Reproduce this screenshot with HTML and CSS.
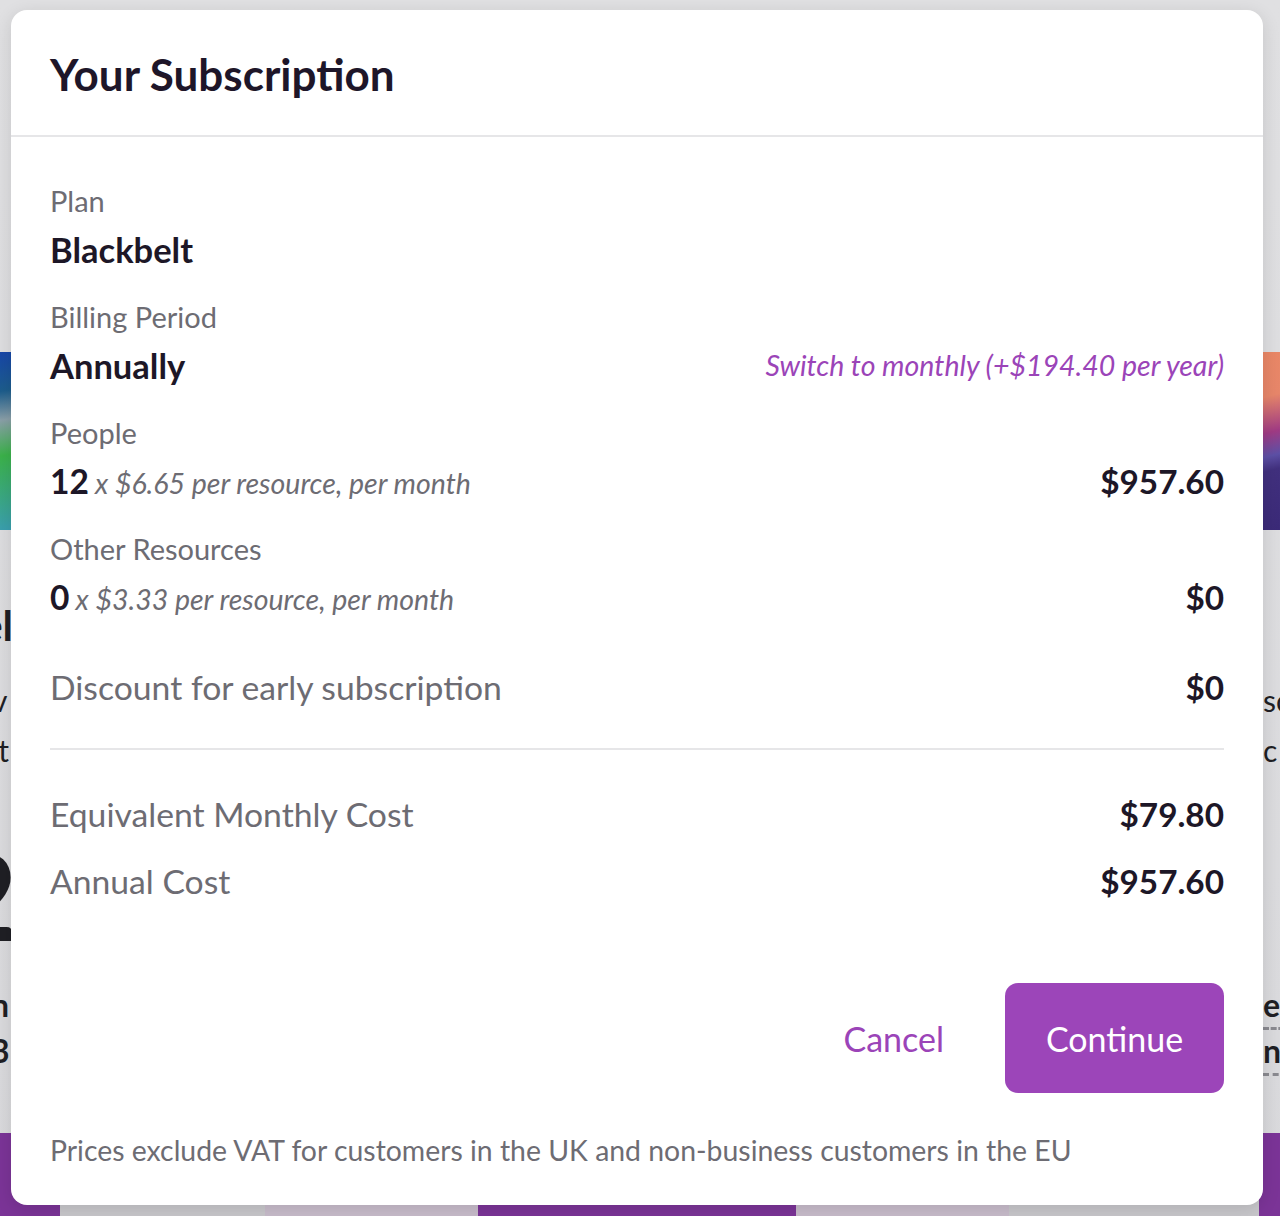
FILE: index.html
```html
<!DOCTYPE html>
<html lang="en">
<head>
<meta charset="utf-8">
<title>Your Subscription</title>
<link rel="stylesheet" href="styles.css">
</head>
<body>
<div class="backdrop">
  <div class="bg-cards">
    <div class="bg-card bg-left">
      <div class="bg-inner">
        <div class="bg-img img-a"></div>
        <div class="bg-title">Tel</div>
        <div class="bg-line first">v</div>
        <div class="bg-line">ct</div>
        <div class="bg-big">2</div>
        <div class="bg-small first-small">n</div>
        <div class="bg-small">3</div>
      </div>
    </div>
    <div class="bg-card bg-mid"></div>
    <div class="bg-card bg-right">
      <div class="bg-inner">
        <div class="bg-img img-b"></div>
        <div class="bg-title">&nbsp;</div>
        <div class="bg-line first">sc</div>
        <div class="bg-line">c</div>
        <div class="bg-big">&nbsp;</div>
        <div class="bg-small first-small dashed">er</div>
        <div class="bg-small dashed">ne</div>
      </div>
    </div>
  </div>
  <div class="bg-bar">
    <span class="seg purple s1"></span>
    <span class="seg gray s2"></span>
    <span class="seg lav s3"></span>
    <span class="seg purple s4"></span>
    <span class="seg lav s5"></span>
    <span class="seg gray s6"></span>
    <span class="seg purple s7"></span>
  </div>
</div>

<div class="modal">
  <header class="modal-head">
    <h1>Your Subscription</h1>
  </header>
  <div class="modal-body">
    <div class="field">
      <div class="label">Plan</div>
      <div class="row"><span class="value">Blackbelt</span></div>
    </div>
    <div class="field">
      <div class="label">Billing Period</div>
      <div class="row"><span class="value">Annually</span><a class="switch" href="#">Switch to monthly (+$194.40 per year)</a></div>
    </div>
    <div class="field">
      <div class="label">People</div>
      <div class="row"><span><b class="qty">12</b> <i class="rate">x $6.65 per resource, per month</i></span><span class="amount">$957.60</span></div>
    </div>
    <div class="field">
      <div class="label">Other Resources</div>
      <div class="row"><span><b class="qty">0</b> <i class="rate">x $3.33 per resource, per month</i></span><span class="amount">$0</span></div>
    </div>
    <div class="line discount"><span class="line-label">Discount for early subscription</span><span class="amount">$0</span></div>
    <div class="divider"></div>
    <div class="line total-first"><span class="line-label">Equivalent Monthly Cost</span><span class="amount">$79.80</span></div>
    <div class="line total-second"><span class="line-label">Annual Cost</span><span class="amount">$957.60</span></div>
    <div class="actions">
      <button class="btn-cancel" type="button">Cancel</button>
      <button class="btn-continue" type="button">Continue</button>
    </div>
    <p class="note">Prices exclude VAT for customers in the UK and non-business customers in the EU</p>
  </div>
</div>
</body>
</html>
```
FILE: styles.css
```css
* { box-sizing: border-box; }
html, body { margin: 0; padding: 0; }
body {
  width: 1280px;
  height: 1216px;
  overflow: hidden;
  background: #dfdfe2;
  font-family: Lato, "Open Sans", "Liberation Sans", sans-serif;
  position: relative;
}

/* ---------- dimmed page behind the dialog ---------- */
.backdrop {
  position: absolute;
  inset: 0;
  display: flex;
  flex-direction: column;
  padding-top: 352px;
  background: linear-gradient(#e0e0e2, #d9d9dc);
}
.bg-cards {
  display: flex;
  justify-content: space-between;
  flex: 1;
}
.bg-card { overflow: hidden; }
.bg-left { width: 11px; }
.bg-right { width: 17px; }
.bg-inner {
  display: flex;
  flex-direction: column;
  color: #1f1f24;
  white-space: nowrap;
}
.bg-img { height: 178px; }
.img-a { background: linear-gradient(172deg, #1746a8 0%, #1d5d8c 22%, #8a9fa8 38%, #3bb24a 58%, #3a9fb0 100%); }
.img-b { background: linear-gradient(165deg, #e98766 0%, #e7866a 25%, #a03b84 45%, #5d50a6 58%, #41307e 66%, #3b2a78 100%); }
.bg-title {
  margin-top: 70px;
  font-size: 42px;
  font-weight: 700;
  line-height: 50px;
}
.bg-left .bg-title { margin-left: -40px; }
.bg-line {
  font-size: 30px;
  line-height: 50px;
}
.bg-line.first { margin-top: 25px; }
.bg-left .bg-line { margin-left: -8px; }
.bg-left .bg-line + .bg-line { margin-left: -16px; }
.bg-big {
  margin-top: 55px;
  font-size: 120px;
  line-height: 130px;
  font-weight: 700;
}
.bg-left .bg-big { margin-left: -52px; }
.bg-small {
  font-size: 32px;
  line-height: 46px;
  font-weight: 700;
}
.bg-small.first-small { margin-top: 22px; }
.bg-left .bg-small { margin-left: -9px; }
.dashed { text-decoration: underline dashed #8a8a90; text-underline-offset: 10px; }

.bg-bar {
  display: flex;
  height: 83px;
  flex: none;
}
.seg { display: block; height: 100%; }
.purple { background: #7b3497; }
.gray { background: #c8c7cb; }
.lav { background: #c8bccb; }
.s1 { width: 60px; }
.s2 { width: 205px; }
.s3 { width: 213px; }
.s4 { width: 318px; }
.s5 { width: 213px; }
.s6 { width: 250px; }
.s7 { flex: 1; }

/* ---------- dialog ---------- */
.modal {
  position: absolute;
  top: 10px;
  left: 11px;
  width: 1252px;
  height: 1195px;
  background: #fff;
  border-radius: 16px;
  box-shadow: 0 4px 18px rgba(0, 0, 0, 0.12);
  display: flex;
  flex-direction: column;
  color: #1d1727;
}
.modal-head {
  height: 127px;
  flex: none;
  display: flex;
  align-items: center;
  padding: 0 39px;
  border-bottom: 2px solid #e6e6e8;
}
.modal-head h1 {
  margin: 0;
  font-size: 44px;
  font-weight: 700;
  color: #1e1629;
  padding-top: 2px;
}
.modal-body {
  flex: 1;
  display: flex;
  flex-direction: column;
  padding: 48px 39px 39px;
}
.field { margin-bottom: 27px; }
.label {
  font-size: 29px;
  line-height: 32px;
  color: #6d6c73;
  margin-bottom: 7px;
}
.row {
  display: flex;
  justify-content: space-between;
  align-items: center;
  height: 50px;
}
.value {
  font-size: 34.5px;
  font-weight: 700;
  color: #1d1727;
}
.switch {
  font-size: 28.5px;
  font-style: italic;
  color: #9b44b8;
  text-decoration: none;
}
.qty {
  font-size: 33.5px;
  font-weight: 700;
  color: #1d1727;
  margin-right: 2px;
}
.rate {
  font-size: 28.5px;
  color: #6d6c73;
}
.amount {
  font-size: 33.3px;
  font-weight: 700;
  color: #1d1727;
}
.line {
  display: flex;
  justify-content: space-between;
  align-items: center;
  height: 50px;
}
.line-label {
  font-size: 33.7px;
  color: #6d6c73;
}
.discount { margin-top: 13px; }
.divider {
  height: 2px;
  background: #e6e6e8;
  margin: 36px 0 39px;
}
.total-second { margin-top: 17px; }
.actions {
  display: flex;
  justify-content: flex-end;
  align-items: center;
  gap: 61px;
  margin-top: 77px;
}
.btn-cancel {
  background: none;
  border: 0;
  padding: 0;
  font-family: inherit;
  font-size: 34px;
  color: #9b44b8;
}
.btn-continue {
  width: 219px;
  height: 110px;
  border: 0;
  border-radius: 13px;
  background: #9c45b9;
  color: #fff;
  font-family: inherit;
  font-size: 34px;
}
.note {
  margin: 41px 0 0;
  font-size: 28.4px;
  line-height: 32px;
  color: #6d6c73;
}
```
